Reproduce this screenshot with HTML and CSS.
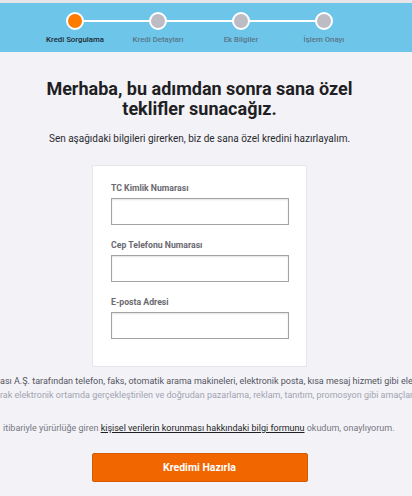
FILE: index.html
```html
<!DOCTYPE html>
<html lang="tr">
<head>
    <meta charset="UTF-8">
    <meta name="viewport" content="width=device-width, initial-scale=1.0">
    <title>Kredi Sorgulama</title>
    <link rel="stylesheet" href="styles.css">
</head>
<body>

    <!-- STEP BAR -->
    <header class="progress">
        <div class="wrap">
            <ol class="steps">
                <li class="step active"><span class="dot"></span><span class="step-label">Kredi Sorgulama</span></li>
                <li class="step"><span class="dot"></span><span class="step-label">Kredi Detayları</span></li>
                <li class="step"><span class="dot"></span><span class="step-label">Ek Bilgiler</span></li>
                <li class="step"><span class="dot"></span><span class="step-label">İşlem Onayı</span></li>
            </ol>
        </div>
    </header>

    <main class="wrap">
        <h1 class="title">Merhaba, bu adımdan sonra sana özel<br>teklifler sunacağız.</h1>
        <p class="subtitle">Sen aşağıdaki bilgileri girerken, biz de sana özel kredini hazırlayalım.</p>

        <!-- FORM CARD -->
        <form class="card">
            <label class="field">
                <span class="field-label">TC Kimlik Numarası</span>
                <input type="text" class="input">
            </label>
            <label class="field">
                <span class="field-label">Cep Telefonu Numarası</span>
                <input type="text" class="input">
            </label>
            <label class="field">
                <span class="field-label">E-posta Adresi</span>
                <input type="text" class="input">
            </label>
        </form>
    </main>

    <!-- CONSENT TEXT -->
    <section class="consent">
        <div class="consent-line">ası A.Ş. tarafından telefon, faks, otomatik arama makineleri, elektronik posta, kısa mesaj hizmeti gibi elektronik</div>
        <div class="consent-line faded">rak elektronik ortamda gerçekleştirilen ve doğrudan pazarlama, reklam, tanıtım, promosyon gibi amaçlarla</div>
        <div class="consent-line kvkk">itibariyle yürürlüğe giren <a href="#">kişisel verilerin korunması hakkındaki bilgi formunu</a> okudum, onaylıyorum.</div>
    </section>

    <div class="wrap">
        <button type="button" class="button-submit">Kredimi Hazırla</button>
    </div>

</body>
</html>
```

FILE: styles.css
```css
/* Colours */
:root {
    --bg-color: #f2f2f7;
    --band-color: #6dc5ea;
    --orange: #f26600;
    --text-dark: #1f1f24;
    --font-family: Roboto, 'Liberation Sans', Arial, sans-serif;
}

body {
    margin: 0;
    background-color: var(--bg-color);
    font-family: var(--font-family);
    color: var(--text-dark);
    overflow: hidden;
}

.wrap {
    width: 399px;
}

/* Step bar */
.progress {
    background-color: var(--band-color);
    border-top: 3px solid #e6e6e9;
    height: 49px;
}
.steps {
    list-style: none;
    margin: 0 auto;
    padding: 9px 0 0;
    width: 332px;
    display: flex;
    position: relative;
}
.steps::before {
    content: "";
    position: absolute;
    left: 41px;
    right: 41px;
    top: 17px;
    height: 2px;
    background: #fff;
}
.step {
    width: 83px;
    display: flex;
    flex-direction: column;
    align-items: center;
    position: relative;
}
.dot {
    width: 14px;
    height: 14px;
    border: 2px solid #fff;
    border-radius: 50%;
    background: #bdbcc4;
}
.step.active .dot {
    background: #ff7a00;
}
.step-label {
    margin-top: 5px;
    font-size: 7.8px;
    line-height: 10px;
    font-weight: 500;
    color: #5a7686;
    white-space: nowrap;
}
.step.active .step-label {
    color: #1d2730;
}

/* Heading */
.title {
    margin: 27px 0 0;
    text-align: center;
    font-size: 18px;
    line-height: 20px;
    font-weight: 700;
}
.subtitle {
    margin: 13px 0 0;
    text-align: center;
    font-size: 10px;
    line-height: 14px;
    color: #2a2a30;
}

/* Form card */
.card {
    width: 177px;
    margin: 19px auto 0;
    padding: 16px 18px 13px;
    background: #fff;
    border: 1px solid #e6e6ec;
    display: flex;
    flex-direction: column;
}
.field {
    display: flex;
    flex-direction: column;
    margin-bottom: 14px;
}
.field-label {
    font-size: 8.7px;
    line-height: 12px;
    font-weight: 700;
    color: #6a6a70;
    margin-bottom: 4px;
}
.input {
    box-sizing: border-box;
    width: 178px;
    height: 27px;
    margin: 0;
    border: 1px solid #a3a3a6;
    border-radius: 0;
    box-shadow: inset 0 1px 2px rgba(0, 0, 0, 0.12);
    background: #fff;
}

/* Consent text */
.consent {
    margin-top: 7px;
    font-size: 9px;
    line-height: 14px;
    color: #55555f;
}
.consent-line {
    white-space: nowrap;
}
.consent-line.faded {
    color: #a3a3b0;
}
.consent-line.kvkk {
    margin-top: 19px;
    padding-left: 3px;
    color: #77777f;
}
.consent a {
    color: #1f1f24;
    text-decoration: underline;
}

/* Button */
.button-submit {
    display: block;
    width: 216px;
    height: 29px;
    margin: 18px auto 0;
    background: var(--orange);
    border: 1px solid #d85a00;
    border-radius: 2px;
    color: #fff;
    font-family: var(--font-family);
    font-size: 10.5px;
    font-weight: 700;
}
```
